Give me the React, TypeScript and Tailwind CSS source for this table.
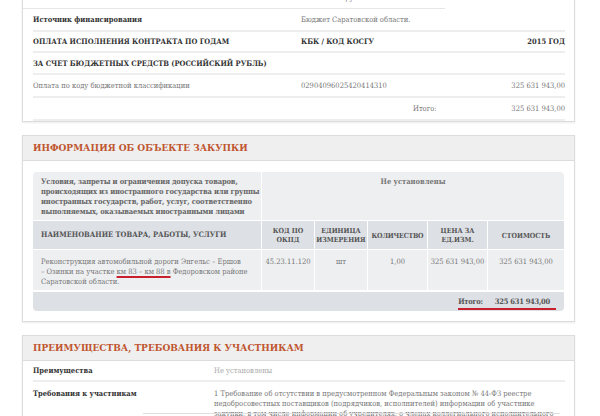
import React from "react";

const F = { fontFamily: '"DejaVu Serif", "Liberation Serif", serif', fontStretch: "condensed" as const };

function TopRow({ children, cls = "h-[22px]" }: { children: React.ReactNode; cls?: string }) {
  return (
    <div className={"grid grid-cols-[268px_112px_1fr_auto] items-center border-b-2 border-[#eceef0] " + cls}>
      {children}
    </div>
  );
}

const hd = "bg-[#dde0e5] flex items-center justify-center text-center font-bold text-[#555] text-[7px] leading-[9px]";
const dc = "bg-[#eeeff1] pt-[7px] text-center";

export default function App() {
  return (
    <div className="w-[600px] h-[416px] overflow-hidden bg-white relative text-[7.5px] leading-[10px] text-[#777]" style={F}>
      <div className="pl-[22px] pr-[25px]">
        {/* Card 1 */}
        <div className="-mt-[14px] border border-[#dcdcdc] shadow-[0_1px_2px_rgba(0,0,0,0.08)]">
          <div className="w-[422px] h-[22px] flex items-center border-b border-[#e6e6e6] pl-[10px]">
            <span className="w-[268px] font-bold text-[#333]">Валюта</span>
            <span>Российский рубль</span>
          </div>
          <div className="pl-[10px] pr-[9px]">
            <TopRow cls="h-[23px] pt-[1px]">
              <span className="font-bold text-[#333]">Источник финансирования</span>
              <span className="col-span-3">Бюджет Саратовской области.</span>
            </TopRow>
            <TopRow cls="h-[21px]">
              <span className="font-bold text-[#333]">ОПЛАТА ИСПОЛНЕНИЯ КОНТРАКТА ПО ГОДАМ</span>
              <span className="col-span-2 font-bold text-[#333]">КБК / КОД КОСГУ</span>
              <span className="font-bold text-[#333] text-right">2015 ГОД</span>
            </TopRow>
            <TopRow cls="h-[22px] pt-[1px]">
              <span className="col-span-4 font-bold text-[#333]">ЗА СЧЕТ БЮДЖЕТНЫХ СРЕДСТВ (РОССИЙСКИЙ РУБЛЬ)</span>
            </TopRow>
            <TopRow cls="h-[23px] pt-[1px]">
              <span>Оплата по коду бюджетной классификации</span>
              <span className="col-span-2">02904096025420414310</span>
              <span className="text-right">325 631 943,00</span>
            </TopRow>
            <TopRow cls="h-[23px] pt-[1px] border-b-0">
              <span></span>
              <span></span>
              <span>Итого:</span>
              <span className="text-right">325 631 943,00</span>
            </TopRow>
          </div>
        </div>

        {/* Card 2 */}
        <div className="mt-[13px] border border-[#dcdcdc] shadow-[0_1px_2px_rgba(0,0,0,0.08)]">
          <div className="h-[25px] bg-[#efefef] border-b border-[#dcdcdc] flex items-center pl-[10px]">
            <span className="font-bold text-[10px] text-[#c0562f]">ИНФОРМАЦИЯ ОБ ОБЪЕКТЕ ЗАКУПКИ</span>
          </div>
          <div className="px-[10px] pt-[11px] pb-[10px]">
            <div className="grid grid-cols-[228px_52px_52px_59px_59px_76px] gap-px rounded-[4px] overflow-hidden">
              <div className="bg-[#eeeff1] pl-[8px] pt-[5px] h-[48px] font-bold text-[#666] whitespace-nowrap tracking-[-0.15px]">
                Условия, запреты и ограничения допуска товаров,<br />
                происходящих из иностранного государства или группы<br />
                иностранных государств, работ, услуг, соответственно<br />
                выполняемых, оказываемых иностранными лицами
              </div>
              <div className="col-span-5 bg-[#eeeff1] pt-[5px] text-center font-bold text-[#777]">Не установлены</div>

              <div className="bg-[#dde0e5] h-[28px] flex items-center pl-[8px] font-bold text-[#555]">НАИМЕНОВАНИЕ ТОВАРА, РАБОТЫ, УСЛУГИ</div>
              <div className={hd}>КОД ПО<br />ОКПД</div>
              <div className={hd}>ЕДИНИЦА<br />ИЗМЕРЕНИЯ</div>
              <div className={hd + " tracking-[-0.2px]"}>КОЛИЧЕСТВО</div>
              <div className={hd}>ЦЕНА ЗА<br />ЕД.ИЗМ.</div>
              <div className={hd}>СТОИМОСТЬ</div>

              <div className="bg-[#eeeff1] h-[40px] pl-[8px] pt-[7px] whitespace-nowrap">
                Реконструкция автомобильной дороги Энгельс – Ершов<br />
                – Озинки на участке{" "}
                <span className="underline decoration-[#c8202c] decoration-2 underline-offset-[2px]">км 83 – км 88 в</span>{" "}
                Федоровском районе<br />
                Саратовской области.
              </div>
              <div className={dc}>45.23.11.120</div>
              <div className={dc}>шт</div>
              <div className={dc}>1,00</div>
              <div className={dc}>325 631 943,00</div>
              <div className={dc}>325 631 943,00</div>

              <div className="col-span-6 mt-px bg-[#dde0e5] h-[19px] flex items-center justify-end pr-[8px] font-bold text-[#555]">
                <span className="pb-[1px] border-b-2 border-[#c8202c] flex gap-[12px] pr-[6px] mt-[3px] tracking-[-0.25px]">
                  <span>Итого:</span>
                  <span>325 631 943,00</span>
                </span>
              </div>
            </div>
          </div>
        </div>

        {/* Card 3 */}
        <div className="mt-[13px] border border-[#dcdcdc] shadow-[0_1px_2px_rgba(0,0,0,0.08)]">
          <div className="h-[25px] bg-[#efefef] border-b border-[#dcdcdc] flex items-center pl-[10px]">
            <span className="font-bold text-[10px] text-[#c0562f]">ПРЕИМУЩЕСТВА, ТРЕБОВАНИЯ К УЧАСТНИКАМ</span>
          </div>
          <div className="pl-[10px] pr-[9px]">
            <div className="grid grid-cols-[181px_1fr] items-center h-[21px] border-b-2 border-[#eceef0]">
              <span className="font-bold text-[#333]">Преимущества</span>
              <span className="text-[#aaa]">Не установлены</span>
            </div>
            <div className="grid grid-cols-[181px_1fr] pt-[7px]">
              <span className="font-bold text-[#333]">Требования к участникам</span>
              <span>
                1 Требование об отсутствии в предусмотренном Федеральным законом № 44-ФЗ реестре недобросовестных поставщиков (подрядчиков, исполнителей) информации об участнике закупки, в том числе информации об учредителях, о членах коллегиального исполнительного органа
              </span>
            </div>
          </div>
        </div>
      </div>
      <div className="absolute left-[143px] right-[40px] bottom-[2px] h-px bg-[#e0e0e0]" />
    </div>
  );
}
